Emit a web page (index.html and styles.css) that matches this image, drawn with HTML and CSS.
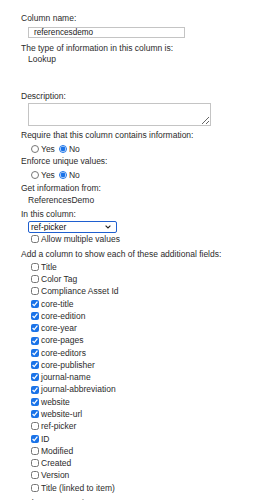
FILE: index.html
```html
<!DOCTYPE html>
<html>
<head>
<meta charset="utf-8">
<link rel="stylesheet" href="styles.css">
</head>
<body>
<form class="form">
  <div class="label">Column name:</div>
  <div class="indent field-row"><input class="text-input" type="text" value="referencesdemo"></div>
  <div class="label type-label">The type of information in this column is:</div>
  <div class="indent line lookup">Lookup</div>
  <div class="label desc">Description:</div>
  <div class="indent area-row"><textarea class="area"></textarea></div>
  <div class="label req">Require that this column contains information:</div>
  <div class="indent line radios">
    <label class="opt"><input type="radio" name="req"> Yes</label>
    <label class="opt"><input type="radio" name="req" checked> No</label>
  </div>
  <div class="label enforce">Enforce unique values:</div>
  <div class="indent line radios">
    <label class="opt"><input type="radio" name="uniq"> Yes</label>
    <label class="opt"><input type="radio" name="uniq" checked> No</label>
  </div>
  <div class="label get">Get information from:</div>
  <div class="indent line">ReferencesDemo</div>
  <div class="label incol">In this column:</div>
  <div class="indent select-row">
    <div class="select-wrap">
      <select class="select"><option>ref-picker</option></select>
      <svg class="chev" width="6" height="4" viewBox="0 0 6 4"><path d="M0.6 0.6 L3 3 L5.4 0.6" fill="none" stroke="#222" stroke-width="1.1"/></svg>
    </div>
  </div>
  <div class="indent line allow"><label class="opt"><input type="checkbox"> Allow multiple values</label></div>
  <div class="label add">Add a column to show each of these additional fields:</div>
  <ul class="fields">
    <li><label class="opt"><input type="checkbox"> Title</label></li>
    <li><label class="opt"><input type="checkbox"> Color Tag</label></li>
    <li><label class="opt"><input type="checkbox"> Compliance Asset Id</label></li>
    <li><label class="opt"><input type="checkbox" checked> core-title</label></li>
    <li><label class="opt"><input type="checkbox" checked> core-edition</label></li>
    <li><label class="opt"><input type="checkbox" checked> core-year</label></li>
    <li><label class="opt"><input type="checkbox" checked> core-pages</label></li>
    <li><label class="opt"><input type="checkbox" checked> core-editors</label></li>
    <li><label class="opt"><input type="checkbox" checked> core-publisher</label></li>
    <li><label class="opt"><input type="checkbox" checked> journal-name</label></li>
    <li><label class="opt"><input type="checkbox" checked> journal-abbreviation</label></li>
    <li><label class="opt"><input type="checkbox" checked> website</label></li>
    <li><label class="opt"><input type="checkbox" checked> website-url</label></li>
    <li><label class="opt"><input type="checkbox"> ref-picker</label></li>
    <li><label class="opt"><input type="checkbox" checked> ID</label></li>
    <li><label class="opt"><input type="checkbox"> Modified</label></li>
    <li><label class="opt"><input type="checkbox"> Created</label></li>
    <li><label class="opt"><input type="checkbox"> Version</label></li>
    <li><label class="opt"><input type="checkbox"> Title (linked to item)</label></li>
  </ul>
  <div class="label tail">Column Formatting</div>
</form>
</body>
</html>
```
FILE: styles.css
```css
html, body {
  margin: 0;
  padding: 0;
  background: #fff;
}
body {
  font-family: "Liberation Sans", Arial, sans-serif;
  font-size: 8.5px;
  color: #2b2b2b;
  overflow: hidden;
}
.form {
  padding: 12.2px 0 0 21px;
}
.label, .line {
  height: 12.3px;
  line-height: 12.3px;
  white-space: nowrap;
}
.indent {
  padding-left: 7px;
}
.field-row {
  display: flex;
  height: 11px;
  margin-top: 2.85px;
}
.text-input {
  box-sizing: border-box;
  width: 157px;
  height: 11px;
  border: 1px solid #c4c4c4;
  padding: 0 0 0 5px;
  margin: 0;
  font: inherit;
  font-size: 8.2px;
  color: #222;
  outline: none;
}
.type-label {
  margin-top: 3.85px;
}
.lookup {
  margin-top: -1.3px;
}
.desc {
  margin-top: 24.7px;
}
.area-row {
  display: flex;
  height: 23px;
  margin-top: 0.35px;
}
.area {
  box-sizing: border-box;
  width: 183px;
  height: 23px;
  border: 1px solid #c4c4c4;
  margin: 0;
  padding: 0;
  resize: both;
}
.req {
  margin-top: 3.35px;
}
.radios {
  display: flex;
  gap: 1px;
  margin-top: 1.2px;
}
.enforce {
  margin-top: 0.2px;
}
.get {
  margin-top: 0.2px;
}
.incol {
  margin-top: 1.7px;
}
.enforce + .radios {
  margin-top: 1.7px;
}
.opt {
  display: inline-flex;
  align-items: center;
  gap: 2px;
}
.opt input {
  width: 8px;
  height: 8px;
  margin: 0 0 0 3px;
  accent-color: #1a73e8;
}
.select-row {
  display: flex;
  height: 11.5px;
  margin-top: 0.85px;
}
.select-wrap {
  position: relative;
  width: 89px;
  height: 11.5px;
}
.select {
  appearance: none;
  -webkit-appearance: none;
  box-sizing: border-box;
  width: 89px;
  height: 11.5px;
  border: 1.5px solid #1f5fcf;
  border-radius: 2px;
  padding: 0 0 0 2px;
  margin: 0;
  font: inherit;
  font-size: 8.5px;
  line-height: 8.5px;
  color: #111;
  background: #fff;
}
.chev {
  position: absolute;
  right: 6px;
  top: 4px;
}
.allow {
  margin-top: 0.85px;
}
.add {
  margin-top: 2.2px;
}
.fields {
  list-style: none;
  margin: 0.7px 0 0;
  padding: 0 0 0 7px;
}
.fields li {
  height: 12.28px;
  line-height: 12.28px;
  white-space: nowrap;
}
.tail {
  margin-top: 3px;
}
```
